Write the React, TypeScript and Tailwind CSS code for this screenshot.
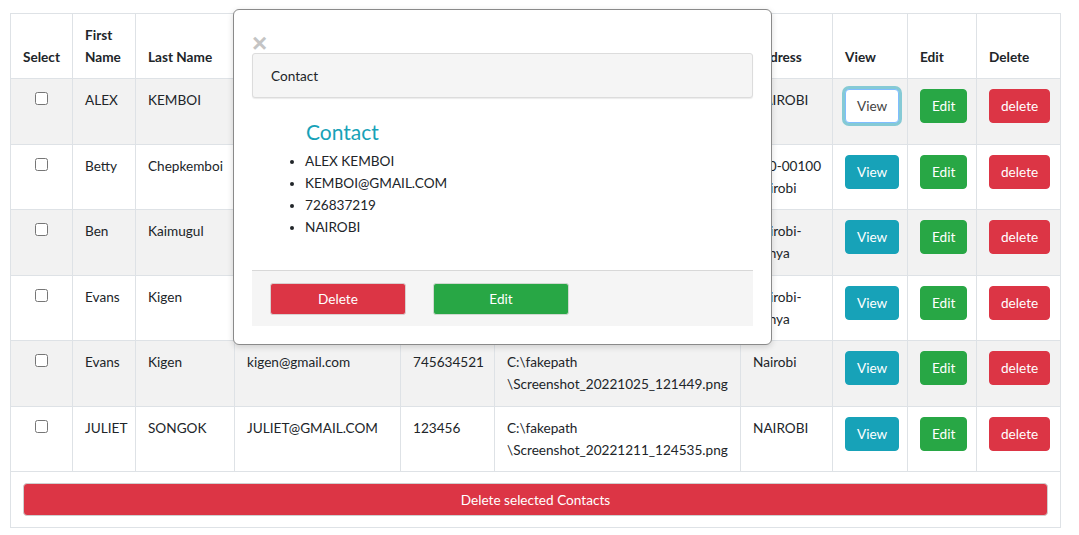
import React from "react";

type Row = {
  first: string;
  last: string;
  email: string;
  phone: string;
  path: string;
  address: string[];
};

const rows: Row[] = [
  { first: "ALEX", last: "KEMBOI", email: "KEMBOI@GMAIL.COM", phone: "726837219", path: "\\Screenshot_20221025_121449.png", address: ["NAIROBI"] },
  { first: "Betty", last: "Chepkemboi", email: "betty@gmail.com", phone: "712345678", path: "\\Screenshot_20221025_121449.png", address: ["100-00100", "Nairobi"] },
  { first: "Ben", last: "Kaimugul", email: "ben@gmail.com", phone: "798765432", path: "\\Screenshot_20221025_121449.png", address: ["Nairobi-", "Kenya"] },
  { first: "Evans", last: "Kigen", email: "kigen@gmail.com", phone: "745634521", path: "\\Screenshot_20221025_121449.png", address: ["Nairobi-", "Kenya"] },
  { first: "Evans", last: "Kigen", email: "kigen@gmail.com", phone: "745634521", path: "\\Screenshot_20221025_121449.png", address: ["Nairobi"] },
  { first: "JULIET", last: "SONGOK", email: "JULIET@GMAIL.COM", phone: "123456", path: "\\Screenshot_20221211_124535.png", address: ["NAIROBI"] },
];

const widths = [62, 63, 99, 166, 94, 246, 92, 75, 69, 84];

export default function App() {
  const td = "border border-[#dee2e6] px-3 pt-[10px] pb-[10.5px] align-top";
  const th = "border border-[#dee2e6] px-3 py-[10px] align-bottom text-left font-bold";
  return (
    <div className="relative min-h-[535px] bg-white pl-[10px] pt-[13px] text-[13.6px] leading-[22px] text-[#212529] font-['Lato','Liberation_Sans',sans-serif]">
      <table className="w-[1050px] table-fixed border-collapse">
        <colgroup>
          {widths.map((w, i) => (
            <col key={i} style={{ width: w }} />
          ))}
        </colgroup>
        <thead>
          <tr>
            <th className={th}>Select</th>
            <th className={th}>First Name</th>
            <th className={th}>Last Name</th>
            <th className={th}>Email</th>
            <th className={th}>Phone Number</th>
            <th className={th}>Image</th>
            <th className={th}>Address</th>
            <th className={th}>View</th>
            <th className={th}>Edit</th>
            <th className={th}>Delete</th>
          </tr>
        </thead>
        <tbody>
          {rows.map((r, i) => (
            <tr key={i} className={i % 2 === 0 ? "bg-[#f2f2f2]" : "bg-white"}>
              <td className={td + " text-center"}>
                <input type="checkbox" className="m-0 mt-[2px] h-[13px] w-[13px]" />
              </td>
              <td className={td}>{r.first}</td>
              <td className={td + " whitespace-nowrap"}>{r.last}</td>
              <td className={td}>{r.email}</td>
              <td className={td}>{r.phone}</td>
              <td className={td + " whitespace-nowrap"}>
                <div>C:\fakepath</div>
                <div>{r.path}</div>
              </td>
              <td className={td + " whitespace-nowrap"}>
                {r.address.map((a, k) => (
                  <div key={k}>{a}</div>
                ))}
              </td>
              <td className={td}>
                {i === 0 ? (
                  <button className="h-[34px] rounded-[4px] border border-[#80bdff] bg-white px-[11px] text-[#444] shadow-[0_0_0_3px_rgba(23,162,184,0.5)]">
                    View
                  </button>
                ) : (
                  <button className="h-[34px] rounded-[4px] border border-[#17a2b8] bg-[#17a2b8] px-[11px] text-white">
                    View
                  </button>
                )}
              </td>
              <td className={td}>
                <button className="h-[34px] rounded-[4px] border border-[#28a745] bg-[#28a745] px-[11px] text-white">
                  Edit
                </button>
              </td>
              <td className={td}>
                <button className="h-[34px] rounded-[4px] border border-[#dc3545] bg-[#dc3545] px-[11px] text-white">
                  delete
                </button>
              </td>
            </tr>
          ))}
          <tr>
            <td colSpan={10} className="border border-[#dee2e6] px-3 py-[11px]">
              <button className="h-[33px] w-full rounded-[4px] border border-[#cfcfcf] bg-[#dc3545] text-white">
                Delete selected Contacts
              </button>
            </td>
          </tr>
        </tbody>
      </table>

      <div className="absolute left-[233px] top-[9px] w-[539px] rounded-[6px] border border-[#8a8a8a] bg-white px-[18px] pb-[18px] pt-[23px] shadow-[0_2px_6px_rgba(0,0,0,0.15)]">
        <div className="h-[20px] font-['Liberation_Sans',sans-serif] text-[26px] font-bold leading-[20px] text-[#c4c4c4]">×</div>
        <div className="flex h-[45px] items-center rounded-[3px] border border-[#dcdcdc] bg-[#f5f5f5] pl-[18px] shadow-[0_1px_1px_rgba(0,0,0,0.08)]">
          Contact
        </div>
        <div className="mt-[21px] pl-[54px] text-[21px] leading-[26px] text-[#17a2b8]">Contact</div>
        <ul className="mt-[5px] list-disc pl-[53px]">
          <li>ALEX KEMBOI</li>
          <li>KEMBOI@GMAIL.COM</li>
          <li>726837219</li>
          <li>NAIROBI</li>
        </ul>
        <div className="mt-[32px] flex gap-[27px] border-t border-[#d8d8d8] bg-[#f5f5f5] px-[18px] pb-[11px] pt-[12px]">
          <button className="h-[32px] w-[136px] rounded-[3px] border border-[#d9d0d0] bg-[#dc3545] text-white">
            Delete
          </button>
          <button className="h-[32px] w-[136px] rounded-[3px] border border-[#d0d9d0] bg-[#28a745] text-white">
            Edit
          </button>
        </div>
      </div>
    </div>
  );
}
